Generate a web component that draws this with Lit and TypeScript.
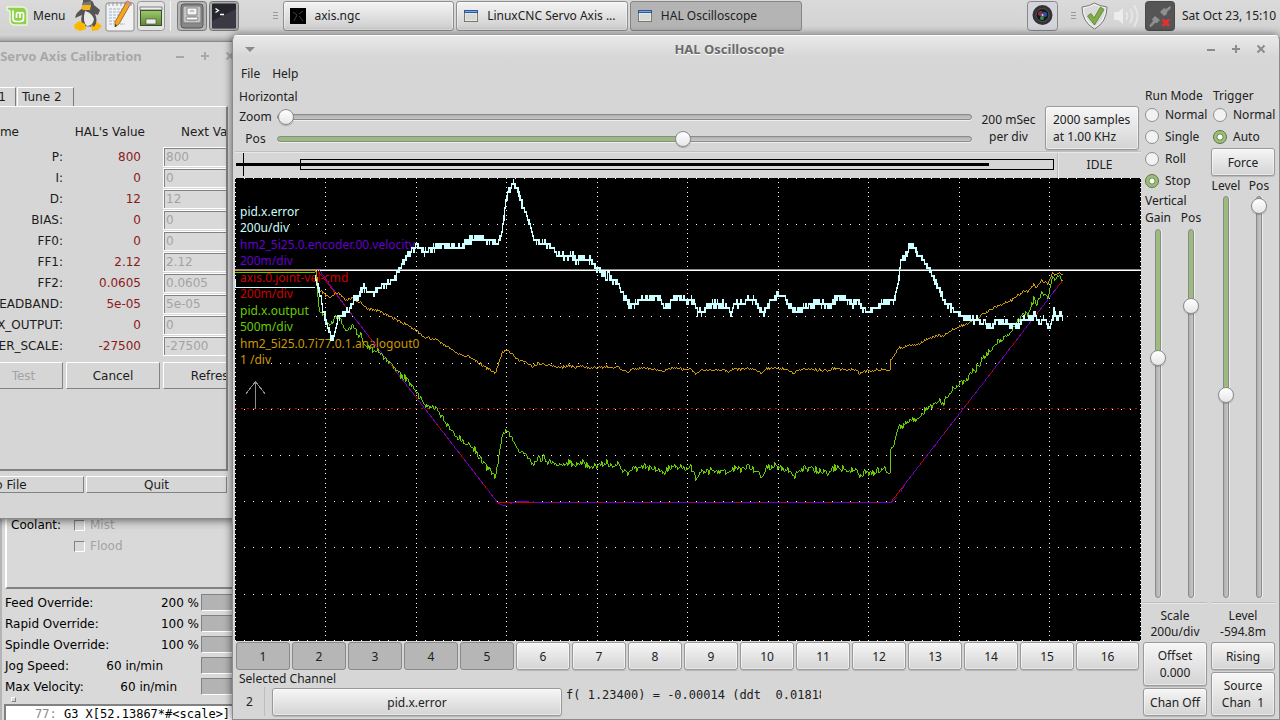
import { LitElement, html, css } from "lit";
import { customElement, property } from "lit/decorators.js";

type Point = [number, number];

const WIDTH = 906;
const HEIGHT = 463;

const COLORS = {
  error: "#ccffff",
  velocity: "#6600cc",
  command: "#cc0000",
  output: "#66cc00",
  analog: "#cc9900",
};

/* Trace samples, in desktop units; shifted to the plot origin when drawn. */
const ORIGIN_X = 235;
const ORIGIN_Y = 178;

const errorPoints: Point[] = [
  [315, 278], [320, 300], [325, 320], [330, 337], [333, 338], [337, 320], [343, 315], [350, 308], [353, 298],
  [358, 297], [362, 287], [367, 293], [373, 293], [380, 287], [390, 282], [395, 278], [398, 270], [407, 255],
  [410, 252], [417, 246], [423, 252], [430, 249], [437, 246], [447, 246], [460, 248], [465, 242], [475, 237],
  [487, 240], [497, 243], [500, 237], [502, 225], [504, 210], [507, 192], [510, 187], [513, 184], [517, 188],
  [520, 202], [525, 213], [530, 230], [533, 240], [540, 243], [548, 245], [553, 250], [565, 258], [571, 254],
  [575, 262], [582, 257], [590, 261], [598, 270], [605, 277], [608, 274], [612, 281], [617, 282], [622, 295],
  [628, 304], [635, 304], [641, 300], [647, 299], [652, 297], [660, 300], [664, 307], [667, 307], [672, 300],
  [680, 296], [687, 303], [692, 300], [697, 312], [702, 312], [707, 305], [723, 304], [730, 312], [733, 304],
  [742, 304], [747, 298], [753, 300], [763, 313], [772, 299], [777, 295], [782, 296], [787, 303], [795, 311],
  [802, 307], [810, 305], [818, 302], [823, 304], [830, 308], [833, 300], [838, 296], [848, 300], [852, 305],
  [856, 300], [862, 310], [867, 312], [877, 307], [885, 300], [893, 302], [897, 283], [900, 262], [905, 255],
  [908, 247], [913, 247], [918, 255], [923, 260], [930, 270], [933, 280], [938, 287], [943, 302], [950, 308],
  [960, 315], [973, 320], [983, 323], [990, 327], [997, 320], [1003, 324], [1017, 325], [1022, 320], [1032, 317],
  [1034, 315], [1039, 323], [1043, 317], [1047, 327], [1050, 326], [1053, 312], [1057, 317], [1061, 314], [1062, 319],
];

const analogPoints: Point[] = [
  [315, 271], [318, 288], [325, 295], [330, 297], [336, 292], [345, 299], [353, 298], [360, 302], [367, 309],
  [377, 310], [393, 318], [410, 326], [423, 336], [437, 340], [457, 353], [470, 357], [487, 368], [495, 373],
  [497, 365], [502, 352], [507, 350], [513, 355], [520, 361], [525, 361], [532, 366], [538, 363], [545, 364],
  [560, 367], [570, 365], [573, 367], [580, 365], [588, 367], [597, 367], [607, 366], [612, 367], [617, 367],
  [622, 369], [628, 372], [633, 368], [650, 368], [656, 369], [663, 371], [668, 368], [678, 367], [683, 369],
  [690, 368], [695, 373], [700, 370], [723, 369], [729, 372], [732, 369], [747, 368], [752, 369], [761, 373],
  [765, 368], [773, 367], [780, 368], [787, 369], [793, 373], [797, 369], [812, 369], [827, 370], [832, 368],
  [848, 369], [855, 369], [859, 373], [863, 371], [870, 370], [883, 369], [889, 369], [890, 360], [893, 356],
  [895, 352], [898, 347], [903, 347], [907, 345], [918, 344], [925, 339], [937, 335], [942, 336], [953, 328],
  [970, 322], [993, 307], [1010, 300], [1025, 290], [1027, 292], [1033, 283], [1036, 287], [1041, 280],
  [1047, 283], [1052, 272], [1055, 275], [1059, 272], [1062, 274],
];

const commandPoints: Point[] = [[317, 270], [497, 502], [890, 502], [1062, 280]];

const velocityPoints: Point[] = [
  [319, 270], [345, 306], [497, 502], [503, 505], [510, 503], [518, 501], [530, 501], [536, 502], [891, 502],
  [898, 495], [904, 484], [1062, 280],
];

/* Repeatable noise in the range -1..1. */
function noise(seed: number): () => number {
  let s = seed;
  return () => {
    s = (s * 1664525 + 1013904223) % 4294967296;
    return (s / 4294967296) * 2 - 1;
  };
}

function sample(points: Point[], amplitude = 0, seed = 1): Point[] {
  const next = noise(seed);
  const out: Point[] = [];
  let i = 0;
  for (let x = points[0][0]; x <= points[points.length - 1][0]; x++) {
    while (i < points.length - 2 && points[i + 1][0] <= x) i++;
    const [x0, y0] = points[i];
    const [x1, y1] = points[i + 1];
    out.push([x, y0 + ((y1 - y0) * (x - x0)) / (x1 - x0) + next() * amplitude]);
  }
  return out;
}

function bar(x: number, top: number, size: number): string {
  return `M${x - ORIGIN_X} ${top - ORIGIN_Y}h1v${size}h-1z`;
}

/* One vertical bar per pixel column, joined to the column before it. */
function columns(points: Point[], visible: (x: number) => boolean = () => true): string {
  let d = "";
  let last = Math.round(points[0][1]);
  for (const [x, value] of points) {
    const y = Math.round(value);
    const from = y > last ? last + 1 : y;
    const to = y < last ? last - 1 : y;
    if (visible(x)) d += bar(x, Math.min(from, to), Math.abs(to - from) + 1);
    last = y;
  }
  return d;
}

/* Several coarse samples per pixel column, drawn as the range that they span. */
function envelope(points: Point[], step: number, amplitude: number, seed: number): string {
  const next = noise(seed);
  let d = "";
  let last = points[0][1];
  for (const [x, value] of sample(points)) {
    const values = [last];
    for (let k = 0; k < 2; k++) values.push(Math.round((value + next() * amplitude) / step) * step);
    last = values[values.length - 1];
    const top = Math.min(...values);
    d += bar(x, top - 1, Math.max(...values) - top + 2);
  }
  return d;
}

function gridDots(): string {
  let d = "";
  const dot = (x: number, y: number) => (d += `M${Math.floor(x)} ${Math.floor(y)}h1v1h-1z`);
  for (let row = 0; row <= 10; row++) for (let k = 0; k <= 100; k++) dot(k * 9.05, row * 46.2 + 0.3);
  for (let col = 0; col <= 10; col++) for (let k = 0; k <= 100; k++) dot(col * 90.5, k * 4.62 + 0.3);
  return d;
}

const analog = sample(analogPoints, 1.2, 11);
const ripple = noise(29);
const output: Point[] = analog.map(([x, y]) => [x, 272 + 2 * (y - 270.5) + ripple() * 2]);

const sheet = css`
  *, *::before, *::after { box-sizing: border-box; }
  button, input { font: inherit; color: inherit; margin: 0; }
  svg { display: block; }
`;

@customElement("scope-plot")
export class ScopePlot extends LitElement {
  static styles = [sheet, css`
    :host { display: block; position: relative; background: #000; overflow: hidden; }
    .layer { position: absolute; inset: 0; width: 100%; height: 100%; }
    .legend { position: absolute; left: 5px; top: 25px; margin: 0; padding: 0; list-style: none; white-space: nowrap; }
    .name, .unit { display: table; background: #000; height: 17px; line-height: 17px; }
    .unit { height: 16px; line-height: 16px; }
    .error { color: #ccffff; }
    .velocity { color: #6600cc; }
    .command { color: #cc0000; }
    .output { color: #66cc00; }
    .analog { color: #cc9900; }
  `];

  render() {
    const legend = [
      ["error", "pid.x.error", "200u/div"],
      ["velocity", "hm2_5i25.0.encoder.00.velocity", "200m/div"],
      ["command", "axis.0.joint-vel-cmd", "200m/div"],
      ["output", "pid.x.output", "500m/div"],
      ["analog", "hm2_5i25.0.7i77.0.1.analogout0", "1 /div"],
    ];
    const box = `0 0 ${WIDTH} ${HEIGHT}`;
    return html`
      <svg class="layer" viewBox=${box} preserveAspectRatio="none" shape-rendering="crispEdges" aria-hidden="true">
        <path d=${gridDots()} fill="#fff" />
      </svg>
      <ul class="legend">
        ${legend.map(([kind, name, unit]) => html`<li class=${kind}><span class="name">${name}</span><span class="unit">${unit}</span></li>`)}
      </ul>
      <svg class="layer" viewBox=${box} preserveAspectRatio="none" shape-rendering="crispEdges" role="img" aria-label="Channel traces">
        <path d="M0 230.5H906" stroke="#cc0000" stroke-dasharray="2 4" />
        <path d="M20.5 231V203.500M20.500 203.500L10.500 216.500M20.500 203.500L30.500 216.500" stroke="#8c8c8c" fill="none" />
        <path d="M0 91.500H906" stroke="#888" />
        <path d="M80 92.500H906" stroke="#fff" />
        <path d="M0 94.500H80" stroke=${COLORS.output} />
        <path d="M0 92.500H80" stroke=${COLORS.analog} />
        <path d="M.5 101V109.500H80" stroke=${COLORS.error} fill="none" />
        <path d=${columns(sample(commandPoints))} fill=${COLORS.command} />
        <path d=${columns(sample(velocityPoints, 0.3, 3), (x) => x % 23 > 3 || x < 330)} fill=${COLORS.velocity} />
        <path d=${columns(output)} fill=${COLORS.output} />
        <path d=${columns(analog)} fill=${COLORS.analog} />
        <path d=${envelope(errorPoints, 4, 3, 5)} fill=${COLORS.error} />
      </svg>
    `;
  }
}

@customElement("gtk-slider")
export class GtkSlider extends LitElement {
  @property() label = "";
  @property({ type: Number }) value = 0;
  @property({ type: Boolean, reflect: true }) vertical = false;

  static styles = [sheet, css`
    :host { display: flex; min-width: 0; min-height: 0; }
    input { appearance: none; -webkit-appearance: none; background: none; width: 100%; height: 16px; min-width: 0; min-height: 0; }
    input::-webkit-slider-runnable-track {
      height: 6px; border-radius: 3px; border: 1px solid #8a8a8a; box-shadow: 0 1px 0 #eee;
      background: linear-gradient(to right, #9cbb7c var(--fill), transparent var(--fill)), linear-gradient(#b0b0b0, #c6c6c6);
    }
    input::-webkit-slider-thumb {
      appearance: none; -webkit-appearance: none; width: 16px; height: 16px; margin-top: -6px; border-radius: 50%;
      border: 1px solid #8b8b8b; background: linear-gradient(#fff, #e6e6e6); box-shadow: 0 1px 1px rgba(0, 0, 0, 0.2);
    }
    .upright { writing-mode: vertical-lr; width: 16px; height: 100%; }
    .upright::-webkit-slider-runnable-track {
      width: 6px; height: 100%; box-shadow: 1px 0 0 #eee;
      background: linear-gradient(to bottom, #9cbb7c var(--fill), transparent var(--fill)), linear-gradient(to right, #b0b0b0, #c6c6c6);
    }
    .upright::-webkit-slider-thumb { margin-top: 0; margin-left: -6px; }
  `];

  render() {
    return html`<input type="range" class=${this.vertical ? "upright" : "flat"} min="0" max="1000"
      .value=${String(this.value)} aria-label=${this.label} style="--fill: ${this.value / 10}%" />`;
  }
}

@customElement("hal-scope")
export class HalScope extends LitElement {
  static styles = [sheet, css`
    :host {
      display: flex; flex-direction: column; background: #d6d6d6; color: #212121; font: 12px/16px "Noto Sans", sans-serif;
      border: 1px solid #8b8b8b; border-top-color: #fff; border-radius: 5px 5px 0 0; box-shadow: 0 0 9px rgba(0, 0, 0, 0.6);
    }
    .title { display: grid; grid-template-columns: 22px 1fr 75px; align-items: center; height: 26px; border-radius: 5px 5px 0 0;
      background: linear-gradient(#e9e9e9, #d6d6d6 22px); color: #6a6a6a; text-shadow: 0 1px 0 #fff; }
    .title h1 { margin: 0; text-align: center; font-size: 13px; line-height: 26px; }
    .chevron { width: 0; margin-left: 12px; border: 5px solid transparent; border-top-color: #8b8b8b; border-bottom: 0; }
    .wm { display: flex; gap: 15px; justify-content: flex-end; padding-right: 13px; }
    .wm button, .menu button { border: 0; padding: 0; background: none; }
    .wm svg { width: 10px; height: 10px; }
    .menu { display: flex; gap: 12px; height: 24px; padding-left: 8px; margin-bottom: 2px; }
    .body { flex: 1; min-height: 0; display: grid; grid-template-columns: minmax(0, 1fr) 64px 64px; grid-template-rows: minmax(0, 1fr); padding: 0 8px 1px 2px; }
    .main { display: flex; flex-direction: column; min-width: 0; margin-right: 2px; }
    .side { display: flex; flex-direction: column; padding-bottom: 2px; min-height: 0; }
    .trigger { margin-left: 4px; margin-right: -4px; }
    .push { border: 1px solid #9a9a9a; border-radius: 3px; background: linear-gradient(#f6f6f6, #d4d4d4);
      box-shadow: inset 0 0 0 1px rgba(255, 255, 255, 0.5), 0 1px 1px rgba(0, 0, 0, 0.15); padding: 0; line-height: 17px; white-space: pre; height: 28px; }
    .tall { height: 44px; }
    .samples { text-align: left; padding-left: 7px; }
    .on { background: #b6b6b6; border-color: #8a8a8a; box-shadow: none; }
    .heading { padding-left: 4px; line-height: 17px; height: 18px; }
    .horizontal { display: grid; grid-template-columns: 41px minmax(0, 1fr) 71px 94px; column-gap: 1px; padding-right: 2px; height: 44px; margin-bottom: 1px; align-items: center; }
    .rows { display: grid; grid-template-rows: 22px 22px; align-items: center; text-align: center; }
    .rate { text-align: center; line-height: 17px; }
    .record { display: grid; grid-template-columns: minmax(0, 1fr) 84px; height: 27px; border-top: 1px solid #c0c0c0; box-shadow: inset 0 1px 0 #e8e8e8; }
    .record svg { width: 100%; height: 25px; margin-top: 1px; }
    .state { border-left: 1px solid #bdbdbd; box-shadow: inset 1px 0 0 #e8e8e8; text-align: center; line-height: 24px; margin-top: 1px; }
    scope-plot { flex: 1; min-height: 0; }
    .channels { display: flex; gap: 2px; padding: 1px 2px 0 1px; }
    .channels .push { flex: 0 1 54px; }
    .channels .push:last-child { flex: 1; }
    .selected { padding-left: 4px; height: 17px; line-height: 17px; }
    .source { display: flex; height: 31px; }
    .number { width: 30px; text-align: center; line-height: 29px; border-right: 1px solid #bdbdbd; height: 29px; }
    .signal { flex: 0 1 290px; margin: 1px 4px 0 7px; }
    .readout { width: 255px; overflow: hidden; white-space: pre; font: 12px/16px "DejaVu Sans Mono", monospace; }
    .choice { display: flex; align-items: center; gap: 6px; height: 22px; padding-left: 2px; white-space: nowrap; }
    .choice input { appearance: none; -webkit-appearance: none; flex: none; width: 14px; height: 14px; border: 1px solid #8f8f8f; border-radius: 50%; background: #f2f2f2; }
    .choice input:checked { border-color: #5d7249; background: radial-gradient(circle, #fff 2px, #6f8a55 3px, #9cc078 4px); }
    .caption { padding-left: 2px; white-space: nowrap; }
    .pair { display: grid; grid-template-columns: 30px 36px; margin-right: -2px; justify-items: center; line-height: 17px; }
    .faders { flex: 1; min-height: 0; display: grid; grid-template-columns: 30px 36px; grid-template-rows: minmax(0, 1fr); justify-items: center; margin: 3px -2px 4px 0; }
    .level { margin-top: 2px; }
    .value { border-top: 1px solid #bdbdbd; box-shadow: inset 0 1px 0 #e8e8e8; text-align: center; padding: 5px 0 2px; }
    .stack { display: flex; flex-direction: column; gap: 2px; }
    .force { margin-bottom: 1px; }
    .vertical { line-height: 17px; }
  `];

  private radio(group: string, name: string, checked = false) {
    return html`<label class="choice"><input type="radio" name=${group} ?checked=${checked} />${name}</label>`;
  }

  render() {
    const wm = (label: string, d: string) => html`<button aria-label=${label}>
      <svg viewBox="0 0 10 10"><path d=${d} stroke="#8c8c8c" stroke-width="2" fill="none" /></svg></button>`;
    return html`
      <header class="title">
        <span class="chevron"></span>
        <h1>HAL Oscilloscope</h1>
        <span class="wm">${wm("Minimize", "M1 6H9")}${wm("Maximize", "M1 5H9M5 1V9")}${wm("Close", "M1.500 1.500L8.500 8.500M8.500 1.500L1.500 8.500")}</span>
      </header>
      <nav class="menu"><button>File</button><button>Help</button></nav>
      <div class="body">
        <section class="main">
          <div class="heading">Horizontal</div>
          <div class="horizontal">
            <div class="rows"><span>Zoom</span><span>Pos</span></div>
            <div class="rows"><gtk-slider label="Zoom"></gtk-slider><gtk-slider label="Horizontal position" .value=${586}></gtk-slider></div>
            <div class="rate">200 mSec<br />per div</div>
            <button class="push tall samples">2000 samples<br />at 1.00 KHz</button>
          </div>
          <div class="record">
            <svg viewBox="0 0 822 25" preserveAspectRatio="none" shape-rendering="crispEdges" aria-hidden="true">
              <path d="M8.500 0V23M65.500 6.500H818.500V16.500H65.500Z" fill="none" stroke="#000" />
              <path d="M1 10H754V13H1Z" />
            </svg>
            <div class="state">IDLE</div>
          </div>
          <scope-plot></scope-plot>
          <div class="channels">
            ${Array.from({ length: 16 }, (_, i) => html`<button class="push ${i < 5 ? "on" : ""}">${i + 1}</button>`)}
          </div>
          <div class="selected">Selected Channel</div>
          <div class="source">
            <div class="number">2</div>
            <button class="push signal">pid.x.error</button>
            <output class="readout">f( 1.23400) = -0.00014 (ddt  0.01818)</output>
          </div>
        </section>
        <section class="side">
          <div class="caption">Run Mode</div>
          ${this.radio("run", "Normal")}${this.radio("run", "Single")}${this.radio("run", "Roll")}${this.radio("run", "Stop", true)}
          <div class="caption vertical">Vertical</div>
          <div class="pair"><span>Gain</span><span>Pos</span></div>
          <div class="faders">
            <gtk-slider vertical label="Gain" .value=${343}></gtk-slider>
            <gtk-slider vertical label="Vertical position" .value=${195}></gtk-slider>
          </div>
          <div class="value">Scale<br />200u/div</div>
          <div class="stack"><button class="push tall">Offset<br />0.000</button><button class="push">Chan Off</button></div>
        </section>
        <section class="side trigger">
          <div class="caption">Trigger</div>
          ${this.radio("trigger", "Normal")}${this.radio("trigger", "Auto", true)}
          <button class="push force">Force</button>
          <div class="pair"><span>Level</span><span>Pos</span></div>
          <div class="faders level">
            <gtk-slider vertical label="Trigger level" .value=${496}></gtk-slider>
            <gtk-slider vertical label="Trigger position" .value=${2}></gtk-slider>
          </div>
          <div class="value">Level<br />-594.8m</div>
          <div class="stack"><button class="push">Rising</button><button class="push tall">Source<br />Chan  1</button></div>
        </section>
      </div>
    `;
  }
}

@customElement("axis-calibration")
export class AxisCalibration extends LitElement {
  static styles = [sheet, css`
    :host { display: flex; flex-direction: column; background: #d6d6d6; color: #1c1c1c; font: 12px/16px "DejaVu Sans", sans-serif;
      border: 1px solid #8b8b8b; box-shadow: 0 1px 9px rgba(0, 0, 0, 0.6); }
    .title { display: flex; justify-content: space-between; align-items: center; height: 28px; padding: 0 5px 0 43px; color: #a8a8a8; }
    .title h2 { margin: 0; font: bold 13px/28px "Noto Sans", sans-serif; white-space: nowrap; }
    .wm { display: flex; gap: 15px; }
    .wm svg { width: 10px; height: 10px; }
    .wm button { border: 0; padding: 0; background: none; }
    .tabs { display: flex; justify-content: flex-start; gap: 1px; padding: 17px 0 0 60px; }
    .tab { width: 65px; height: 19px; padding: 0 9px 0 4px; text-align: right; border: 1px solid #fff; border-right-color: #7a7a7a; border-bottom: 0; background: none; white-space: nowrap; }
    .second { width: 57px; text-align: left; }
    .page { flex: 1; min-height: 0; overflow: hidden; margin-right: 12px; border: 1px solid #fff; border-right: 2px solid #828282; border-bottom: 2px solid #828282; }
    .form { display: grid; grid-template-columns: 171px 78px 161px; grid-template-rows: 24px; grid-auto-rows: 21px; align-items: center; padding-top: 15px; }
    .head { display: contents; }
    .head span { line-height: 20px; margin-bottom: 5px; white-space: nowrap; }
    .name, .value { text-align: right; }
    .column { text-align: right; padding-right: 44px; }
    .hal { margin-right: -4px; text-align: right; }
    .next { padding-left: 40px; }
    .value { color: #8b1a1a; }
    .entry { height: 20px; margin-left: 22px; padding: 0 2px; border: 1px solid #fff; border-radius: 0; outline: 0; min-width: 0;
      background: #d9d9d9; color: #a3a3a3; box-shadow: inset 1px 1px 0 #828282; }
    .raised { border: 1px solid #fff; border-right-color: #828282; border-bottom-color: #828282; background: none; padding: 0; height: 27px; }
    .actions { display: flex; gap: 3px; margin: 6px 0 0 92px; width: 300px; }
    .actions .raised { width: 94px; }
    .actions .narrow { width: 79px; color: #a3a3a3; }
    .actions .wide { width: 101px; }
    .footer { display: flex; gap: 2px; margin: 5px 13px 25px 5px; }
    .footer .raised { height: 17px; line-height: 14px; flex: 0 0 188px; padding-left: 4px; }
    .footer .quit { flex: 1; padding: 0; }
  `];

  render() {
    const rows = [
      ["P:", "800"], ["I:", "0"], ["D:", "12"], ["BIAS:", "0"], ["FF0:", "0"], ["FF1:", "2.12"], ["FF2:", "0.0605"],
      ["DEADBAND:", "5e-05"], ["MAX_OUTPUT:", "0"], ["ENCODER_SCALE:", "-27500"],
    ];
    const wm = (label: string, d: string) => html`<button aria-label=${label}>
      <svg viewBox="0 0 10 10"><path d=${d} stroke="#a8a8a8" stroke-width="2" fill="none" /></svg></button>`;
    return html`
      <header class="title">
        <h2>LinuxCNC Servo Axis Calibration</h2>
        <span class="wm">${wm("Minimize", "M1 6H9")}${wm("Maximize", "M1 5H9M5 1V9")}${wm("Close", "M1.500 1.500L8.500 8.500M8.500 1.500L1.500 8.500")}</span>
      </header>
      <div class="tabs"><button class="tab">Tune 1</button><button class="tab second">Tune 2</button></div>
      <div class="page">
        <div class="form">
          <div class="head"><span class="column">Name</span><span class="hal">HAL's Value</span><span class="next">Next Value</span></div>
          ${rows.map(([name, value], i) => html`
            <label class="name" for="p${i}">${name}</label><output class="value">${value}</output>
            <input class="entry" id="p${i}" disabled .value=${value} />`)}
        </div>
        <div class="actions"><button class="raised narrow" disabled>Test</button><button class="raised">Cancel</button><button class="raised wide">Refresh</button></div>
      </div>
      <div class="footer"><button class="raised">Save to File</button><button class="raised quit">Quit</button></div>
    `;
  }
}

@customElement("axis-window")
export class AxisWindow extends LitElement {
  static styles = [sheet, css`
    :host { display: flex; flex-direction: column; background: #d9d9d9; color: #000; font: 12px/16px "DejaVu Sans", sans-serif;
      border-left: 2px solid #b4b4b4; padding-left: 3px; }
    .panel { height: 190px; border: 2px solid #fff; border-right: 0; border-bottom-color: #828282; padding: 116px 0 0 4px; display: grid; grid-template-columns: 63px 1fr; align-content: start; }
    .options { display: grid; gap: 5px; }
    .option { display: flex; align-items: center; gap: 5px; color: #a3a3a3; }
    .option input { appearance: none; -webkit-appearance: none; width: 11px; height: 11px; border: 1px solid #fff; border-top-color: #828282; border-left-color: #828282; }
    .speeds { display: grid; grid-auto-rows: 21px; padding-top: 3px; }
    .speed { display: grid; grid-template-columns: 1fr auto 33px; align-items: center; column-gap: 2px; white-space: pre; }
    .speed input { appearance: none; -webkit-appearance: none; width: 80px; height: 17px; border: 1px solid #fff; border-top-color: #828282; border-left-color: #828282; background: #b3b3b3; }
    .speed input::-webkit-slider-thumb { appearance: none; -webkit-appearance: none; width: 0; }
    .jog { padding-right: 36px; }
    .max { padding-right: 22px; }
    .sash { width: 5px; height: 5px; margin: 0 0 2px 6px; border: 1px solid #fff; border-right-color: #828282; border-bottom-color: #828282; }
    .code { flex: 1; min-height: 0; margin: 0 0 0 -1px; padding: 0 0 0 29px; border-top: 2px solid #828282; border-left: 2px solid #828282; background: #fff; font: 12px/16px "DejaVu Sans Mono", monospace; white-space: pre; overflow: hidden; }
    .line { color: #8a8a8a; }
  `];

  render() {
    const speeds = [
      ["Feed Override:", "200 %", ""], ["Rapid Override:", "100 %", ""], ["Spindle Override:", "100 %", ""],
      ["Jog Speed:", "60 in/min", "jog"], ["Max Velocity:", "60 in/min", "max"],
    ];
    return html`
      <div class="panel">
        <span>Coolant:</span>
        <div class="options">
          <label class="option"><input type="checkbox" disabled />Mist</label>
          <label class="option"><input type="checkbox" disabled />Flood</label>
        </div>
      </div>
      <div class="speeds">
        ${speeds.map(([name, value, kind], i) => html`<div class="speed"><label for="s${i}">${name}</label><output class=${kind}>${value}</output><input type="range" id="s${i}" /></div>`)}
      </div>
      <div class="sash"></div>
      <div class="code"><span class="line">77:</span> G3 X[52.13867*#&lt;scale&gt;] Y</div>
    `;
  }
}

@customElement("desk-panel")
export class DeskPanel extends LitElement {
  static styles = [sheet, css`
    :host { display: flex; align-items: center; background: linear-gradient(#dadada, #d2d2d2); color: #212121; font: 12px/16px "Noto Sans", sans-serif; padding: 0 4px 1px 6px; white-space: nowrap; }
    button { border: 0; padding: 0; background: none; }
    .menu { display: flex; align-items: center; gap: 5px; margin-right: 9px; }
    .launchers { display: flex; gap: 2px; }
    .rule { width: 1px; height: 30px; margin: 0 6px 0 5px; background: #f4f4f4; }
    .grip { width: 5px; height: 9px; margin: 0 5px 0 34px; background: repeating-linear-gradient(#999 0 1px, transparent 1px 3px); }
    .tasks { display: flex; flex: 0 1 518px; gap: 2px; min-width: 0; }
    .task { display: flex; align-items: center; gap: 8px; flex: 1; height: 30px; padding: 0 6px; min-width: 0; border: 1px solid #8f8f8f; border-radius: 3px; background: linear-gradient(#f4f4f4, #cdcdcd); box-shadow: inset 0 0 0 1px rgba(255, 255, 255, 0.4); }
    .app { gap: 9px; padding-left: 7px; }
    .active { background: #b4b4b4; border-color: #868686; box-shadow: none; }
    .tray { display: flex; align-items: center; margin-left: auto; }
    .tray .grip { margin: 0 5px 0 13px; }
    .tray svg { margin-right: 5px; }
    .tray .camera { margin: 0; }
    .tray .speaker { margin-right: 4px; }
    .clock { margin-left: 2px; }
  `];

  render() {
    const windowIcon = html`<svg width="14" height="12" viewBox="0 0 14 12"><rect x=".5" y=".5" width="13" height="11" fill="#e6e8e4" stroke="#777" /><path d="M0 0H14V3H0Z" fill="#2c559f" /><path d="M1 1H13V2H1Z" fill="#7fa6dd" /><path d="M2 4H12V10H2Z" fill="#d7dad2" /></svg>`;
    return html`
      <button class="menu">
        <svg width="22" height="20" viewBox="0 0 22 20"><path d="M1 1H16Q21 1 21 7V19H9Q4 19 4 14V6Q4 4 1 4Z" fill="#8fd14a" stroke="#e9f6dc" stroke-width="1.500" /><path d="M7 4.500V12.500Q7 15.500 10 15.500H14.500Q17.500 15.500 17.500 12.500V8.500Q17.500 6.500 15.500 6.500Q14 6.500 14 8.500V12M14 8.500Q14 6.500 12.200 6.500Q10.500 6.500 10.500 8.500V12" fill="none" stroke="#fff" stroke-width="1.700" /></svg>
        Menu
      </button>
      <div class="launchers">
        <button aria-label="LinuxCNC"><svg width="29" height="32" viewBox="0 0 29 32"><path d="M9 0Q19 -2 20 5L26 10 24 15 21 14Q24 20 21 27L9 26Q6 21 8 15L1 18Q2 12 9 8Z" fill="#555" /><path d="M11 11Q18 13 20 19Q19 26 13 26Q8 22 11 11Z" fill="#e9e9e9" /><path d="M8 3L17 1Q18 8 12 11Q8 8 8 3Z" fill="#777" /><path d="M9 5L17 5 16 10 9 10 7 8Z" fill="#f4b41a" /><path d="M0 25L5 21 11 24 12 29 6 31 1 29Z" fill="#fcb900" /><path d="M17 24L20 27 23 22 28 26 24 30 18 31Z" fill="#fcb900" /></svg></button>
        <button aria-label="Text editor"><svg width="30" height="32" viewBox="0 0 30 32"><rect x="1" y="3" width="28" height="28" rx="2" fill="#f2f2f2" stroke="#8d8d8d" /><path d="M4 2V6M8 2V6M12 2V6M16 2V6M20 2V6M26 2V6" stroke="#999" /><path d="M4 9H17M4 12H15M4 15H16M4 18H12M4 21H11M4 24H9M15 24H20" stroke="#9db4d2" stroke-dasharray="3 1" /><path d="M22 1L26 3 14 24 10 27 10 22Z" fill="#f5a623" stroke="#8a5a12" stroke-width=".8" /><path d="M22 1L26 3 24.500 6 20.500 4Z" fill="#d98c8c" /><path d="M10 24L12 25.500 10 27Z" fill="#333" /></svg></button>
        <button aria-label="Show desktop"><svg width="28" height="30" viewBox="0 0 28 30"><defs><linearGradient id="leaf" x2="0" y2="1"><stop stop-color="#9ac866" /><stop offset="1" stop-color="#5e8a34" /></linearGradient></defs><rect x=".5" y=".5" width="27" height="29" rx="3" fill="#e4e4e4" stroke="#999" /><path d="M3 6H25V25H3Z" fill="#3b4b2d" /><path d="M3 6H25V9H3Z" fill="#eee" stroke="#555" stroke-width=".7" /><path d="M4 10H24V24H4Z" fill="url(#leaf)" /><rect x="9" y="18" width="10" height="5" fill="#eee" stroke="#555" stroke-width=".7" /></svg></button>
      </div>
      <span class="rule"></span>
      <div class="launchers">
        <button aria-label="Files"><svg width="30" height="30" viewBox="0 0 30 30"><rect x=".5" y=".5" width="29" height="29" rx="3" fill="#b5b5b5" stroke="#777" /><rect x="4" y="3" width="22" height="24" rx="3" fill="#888" stroke="#555" /><rect x="6" y="5" width="18" height="17" rx="2" fill="#c4c4c4" stroke="#777" /><rect x="10" y="7" width="10" height="7" fill="#f4f4f4" stroke="#888" /><path d="M13 10H17" stroke="#7b93b0" /><rect x="9" y="16" width="12" height="3" rx="1.500" fill="#fff" stroke="#777" /></svg></button>
        <button aria-label="Terminal"><svg width="30" height="30" viewBox="0 0 30 30"><rect x=".5" y=".5" width="29" height="29" rx="3" fill="#aaa" stroke="#777" /><rect x="3" y="2.500" width="24" height="25" rx="1" fill="#26262e" /><path d="M3 20L27 8V27H3Z" fill="#3a3944" /><path d="M6.500 7.500L9.500 9.500 6.500 11.500M11 13.500H15" fill="none" stroke="#fff" stroke-width="1.300" /></svg></button>
      </div>
      <span class="grip"></span>
      <div class="tasks">
        <button class="task"><svg width="16" height="16" viewBox="0 0 16 16"><path d="M0 0H16V16H0Z" /><path d="M3 4L7 7 4 13M9 6L13 3M9 8L13 13" fill="none" stroke="#444" /></svg>axis.ngc</button>
        <button class="task app">${windowIcon}LinuxCNC Servo Axis ...</button>
        <button class="task app active">${windowIcon}HAL Oscilloscope</button>
      </div>
      <div class="tray">
        <svg class="camera" width="31" height="30" viewBox="0 0 31 30"><rect x=".5" y=".5" width="30" height="29" rx="3" fill="#d4d4dc" stroke="#888" /><circle cx="15.500" cy="14" r="10" fill="#333" /><circle cx="15.500" cy="14" r="6.500" fill="#181824" stroke="#555" /><circle cx="13.500" cy="12.500" r="2.500" fill="#8b2f3f" /><circle cx="17.500" cy="13.500" r="2.500" fill="#2f4fa0" /><circle cx="15" cy="17" r="2" fill="#3c8a4a" /><circle cx="15.500" cy="14" r="1" fill="#cfd6ff" /></svg>
        <span class="grip"></span>
        <svg width="27" height="28" viewBox="0 0 27 28"><path d="M13.500 1Q18 4 26 5Q26 20 13.500 27Q1 20 1 5Q9 4 13.500 1Z" fill="#f0f0f0" stroke="#777" /><path d="M13.500 3Q18 5.500 24 6.500Q23.500 18.500 13.500 24.800Q3.500 18.500 3 6.500Q9 5.500 13.500 3Z" fill="#dadada" /><path d="M6.500 14L10 11.500 13 16 19.500 5 23 7.500 13.500 23Z" fill="#7fae45" stroke="#4f7424" stroke-width=".7" /></svg>
        <svg class="speaker" width="28" height="26" viewBox="0 0 28 26"><path d="M1 9H5L10 5V21L5 17H1Z" fill="#ececec" /><path d="M13 9Q15.500 13 13 17M17 6Q21.500 13 17 20M21 2Q28 13 21 24" fill="none" stroke="#e6e6e6" stroke-width="2" /></svg>
        <svg width="30" height="30" viewBox="0 0 30 30"><rect x=".5" y=".5" width="29" height="29" rx="3" fill="#555" stroke="#494949" /><path d="M4 25L8 20 7 18 10 15 15 19 12 22 10 22 6 26ZM25 5L21 8 19 7 15 11 19 15 22 13 22 11 26 7Z" fill="#8f8f8f" /><path d="M17.500 18.500L24 25M24 18.500L17.500 25" stroke="#e23131" stroke-width="3" /></svg>
        <time class="clock">Sat Oct 23, 15:10</time>
      </div>
    `;
  }
}

@customElement("app-root")
export class AppRoot extends LitElement {
  static styles = [sheet, css`
    :host { display: block; position: relative; height: 100vh; overflow: hidden; background: #d9d9d9; }
    desk-panel { height: 33px; }
    axis-window { position: absolute; left: 0; top: 399px; bottom: 0; width: 234px; }
    axis-calibration { position: absolute; left: -110px; top: 41px; width: 351px; height: 478px; }
    hal-scope { position: absolute; left: 232px; right: 0; top: 35px; bottom: 0; }
  `];

  render() {
    return html`
      <desk-panel></desk-panel>
      <axis-window></axis-window>
      <axis-calibration></axis-calibration>
      <hal-scope></hal-scope>
    `;
  }
}
